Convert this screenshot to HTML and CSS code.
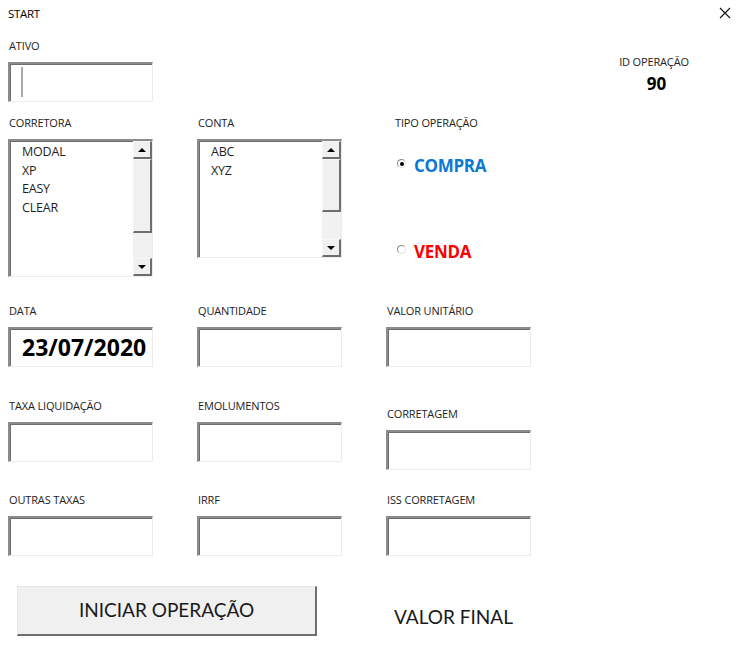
FILE: index.html
```html
<!DOCTYPE html>
<html lang="pt-BR">
<head>
<meta charset="utf-8">
<title>START</title>
<link rel="stylesheet" href="styles.css">
</head>
<body>
<div class="window">
  <div class="titlebar">
    <span class="title">START</span>
    <svg class="close" width="12" height="12" viewBox="0 0 12 12"><path d="M1 1 L11 11 M11 1 L1 11" stroke="#111" stroke-width="1.1" fill="none"/></svg>
  </div>

  <div class="form">
    <div class="row-top">
      <div class="field">
        <div class="label">ATIVO</div>
        <div class="box input"><span class="caret"></span></div>
      </div>
      <div class="id-block">
        <div class="id-label">ID OPERAÇÃO</div>
        <div class="id-value">90</div>
      </div>
    </div>

    <div class="grid row-lists">
      <div class="field">
        <div class="label">CORRETORA</div>
        <div class="box list list-tall">
          <div class="items">
            <div>MODAL</div><div>XP</div><div>EASY</div><div>CLEAR</div>
          </div>
          <div class="scrollbar">
            <div class="sb-btn"><span class="tri-up"></span></div>
            <div class="sb-thumb thumb-tall"></div>
            <div class="sb-track"></div>
            <div class="sb-btn"><span class="tri-down"></span></div>
          </div>
        </div>
      </div>
      <div class="field">
        <div class="label">CONTA</div>
        <div class="box list list-short">
          <div class="items">
            <div>ABC</div><div>XYZ</div>
          </div>
          <div class="scrollbar">
            <div class="sb-btn"><span class="tri-up"></span></div>
            <div class="sb-thumb thumb-short"></div>
            <div class="sb-track"></div>
            <div class="sb-btn"><span class="tri-down"></span></div>
          </div>
        </div>
      </div>
      <div class="field tipo">
        <div class="label">TIPO OPERAÇÃO</div>
        <div class="radio-row compra"><span class="radio checked"></span><span class="radio-text">COMPRA</span></div>
        <div class="radio-row venda"><span class="radio"></span><span class="radio-text">VENDA</span></div>
      </div>
    </div>

    <div class="grid row-gap">
      <div class="field">
        <div class="label">DATA</div>
        <div class="box input date">23/07/2020</div>
      </div>
      <div class="field">
        <div class="label">QUANTIDADE</div>
        <div class="box input"></div>
      </div>
      <div class="field">
        <div class="label">VALOR UNITÁRIO</div>
        <div class="box input"></div>
      </div>
    </div>

    <div class="grid row-gap2">
      <div class="field">
        <div class="label">TAXA LIQUIDAÇÃO</div>
        <div class="box input"></div>
      </div>
      <div class="field">
        <div class="label">EMOLUMENTOS</div>
        <div class="box input"></div>
      </div>
      <div class="field shifted">
        <div class="label">CORRETAGEM</div>
        <div class="box input"></div>
      </div>
    </div>

    <div class="grid row-gap3">
      <div class="field">
        <div class="label">OUTRAS TAXAS</div>
        <div class="box input"></div>
      </div>
      <div class="field">
        <div class="label">IRRF</div>
        <div class="box input"></div>
      </div>
      <div class="field">
        <div class="label">ISS CORRETAGEM</div>
        <div class="box input"></div>
      </div>
    </div>

    <div class="actions">
      <button class="btn">INICIAR OPERAÇÃO</button>
      <div class="valor-final">VALOR FINAL</div>
    </div>

    <div class="peek">
      <span>Lucro liq.</span><span>Valor bruto total</span><span>Taxas totais liq.</span><span>Custo final</span><span>Valor pago</span><span>Total lido</span><span>Saldo</span>
    </div>
  </div>
</div>
</body>
</html>
```

FILE: styles.css
```css
html, body {
  margin: 0;
  padding: 0;
  background: #fff;
}

body {
  font-family: "Open Sans", "Noto Sans", sans-serif;
  color: #1e1e1e;
  width: 740px;
  height: 648px;
  overflow: hidden;
}

.window {
  width: 740px;
  height: 648px;
  overflow: hidden;
}

.titlebar {
  height: 26px;
  display: flex;
  align-items: center;
  justify-content: space-between;
  padding: 0 9px 0 8px;
}

.title {
  font-size: 11.5px;
  color: #000;
  letter-spacing: -0.3px;
}

.close {
  display: block;
}

.form {
  padding-left: 8px;
}

.row-top {
  display: flex;
  margin-top: 12px;
}

.field {
  display: flex;
  flex-direction: column;
  width: 145px;
}

.label {
  font-size: 11px;
  line-height: 16px;
  height: 16px;
  margin-bottom: 8px;
  padding-left: 1px;
  color: #222;
  letter-spacing: -0.15px;
  white-space: nowrap;
}

.box {
  box-sizing: border-box;
  background: #fff;
  border-style: solid;
  border-width: 2px 1px 1px 2px;
  border-color: #8c8c8c #ececec #ececec #8c8c8c;
  box-shadow: inset 1px 1px 0 #6e6e6e;
}

.input {
  height: 40px;
  width: 145px;
}

.caret {
  display: block;
  width: 2px;
  height: 30px;
  background: #a9a9a9;
  margin: 3px 0 0 11px;
}

.id-block {
  margin-left: auto;
  margin-right: 44px;
  width: 84px;
  text-align: center;
  padding-top: 16px;
}

.id-label {
  font-size: 11px;
  line-height: 16px;
  letter-spacing: -0.15px;
  color: #222;
  white-space: nowrap;
}

.id-value {
  font-size: 17px;
  font-weight: 700;
  line-height: 20px;
  margin-top: 4px;
  color: #000;
  padding-left: 5px;
}

.grid {
  display: grid;
  grid-template-columns: 145px 145px 145px;
  column-gap: 44px;
  align-items: start;
}

.row-lists {
  margin-top: 13px;
}

.row-gap {
  margin-top: 26px;
}

.row-gap2 {
  margin-top: 31px;
}

.row-gap3 {
  margin-top: 22px;
}

.shifted {
  margin-top: 8px;
}

/* list boxes */
.list {
  display: flex;
  width: 145px;
}

.list-tall {
  height: 138px;
}

.list-short {
  height: 119px;
}

.items {
  flex: 1;
  padding: 2px 0 0 12px;
  font-size: 12.5px;
  line-height: 18.7px;
  color: #1e1e1e;
  letter-spacing: -0.2px;
}

.scrollbar {
  width: 19px;
  display: flex;
  flex-direction: column;
}

.sb-btn {
  box-sizing: border-box;
  height: 18px;
  background: #f0f0f0;
  border-style: solid;
  border-width: 1px 2px 2px 1px;
  border-color: #f7f7f7 #6e6e6e #6e6e6e #f7f7f7;
  display: flex;
  align-items: center;
  justify-content: center;
}

.tri-up {
  width: 0;
  height: 0;
  border-left: 4px solid transparent;
  border-right: 4px solid transparent;
  border-bottom: 4px solid #000;
}

.tri-down {
  width: 0;
  height: 0;
  border-left: 4px solid transparent;
  border-right: 4px solid transparent;
  border-top: 4px solid #000;
}

.sb-thumb {
  box-sizing: border-box;
  background: #f0f0f0;
  border-style: solid;
  border-width: 1px 2px 2px 1px;
  border-color: #f7f7f7 #6e6e6e #6e6e6e #f7f7f7;
}

.thumb-tall {
  height: 74px;
}

.thumb-short {
  height: 53px;
}

.sb-track {
  flex: 1;
  background-color: #f6f6f6;
  background-image:
    linear-gradient(45deg, #ececec 25%, transparent 25%, transparent 75%, #ececec 75%),
    linear-gradient(45deg, #ececec 25%, transparent 25%, transparent 75%, #ececec 75%);
  background-size: 2px 2px;
  background-position: 0 0, 1px 1px;
}

/* radios */
.tipo {
  padding-left: 9px;
  width: 150px;
}

.tipo .label {
  padding-left: 0;
}

.radio-row {
  display: flex;
  align-items: center;
  margin-left: 2px;
}

.compra {
  margin-top: 17px;
  height: 20px;
}

.venda {
  margin-top: 66px;
  height: 20px;
}

.radio {
  box-sizing: border-box;
  width: 9px;
  height: 9px;
  border-radius: 50%;
  border: 1px solid #8a8a8a;
  border-right-color: #e0e0e0;
  border-bottom-color: #e0e0e0;
  background: #fff;
  margin-right: 8px;
  margin-top: -5px;
  position: relative;
  flex: none;
}

.radio.checked::after {
  content: "";
  position: absolute;
  left: 1.5px;
  top: 1.5px;
  width: 4px;
  height: 4px;
  border-radius: 50%;
  background: #000;
}

.radio-text {
  font-size: 17px;
  font-weight: 700;
  letter-spacing: -0.3px;
  line-height: 20px;
}

.compra .radio-text {
  color: #0a78d4;
}

.venda .radio-text {
  color: #ff0000;
}

/* date */
.date {
  font-size: 23px;
  font-weight: 700;
  color: #000;
  line-height: 36px;
  padding-left: 12px;
  letter-spacing: 0;
  white-space: nowrap;
  overflow: hidden;
}

/* actions */
.actions {
  display: flex;
  align-items: flex-start;
  margin-top: 30px;
  padding-left: 9px;
}

.btn {
  box-sizing: border-box;
  width: 300px;
  height: 50px;
  background: #f0f0f0;
  border-style: solid;
  border-width: 1px 2px 2px 1px;
  border-color: #e6e6e6 #6e6e6e #6e6e6e #e6e6e6;
  font-family: "Lato", "Open Sans", sans-serif;
  font-size: 19px;
  color: #1a1a1a;
  padding: 0 0 2px 0;
  margin: 0;
}

.valor-final {
  font-family: "Lato", "Open Sans", sans-serif;
  font-size: 19px;
  color: #1a1a1a;
  margin-left: 77px;
  line-height: 24px;
  margin-top: 19px;
}

.peek {
  display: flex;
  gap: 30px;
  margin-top: 9px;
  padding-left: 64px;
  font-size: 11px;
  line-height: 16px;
  color: #444;
  white-space: nowrap;
}
```
